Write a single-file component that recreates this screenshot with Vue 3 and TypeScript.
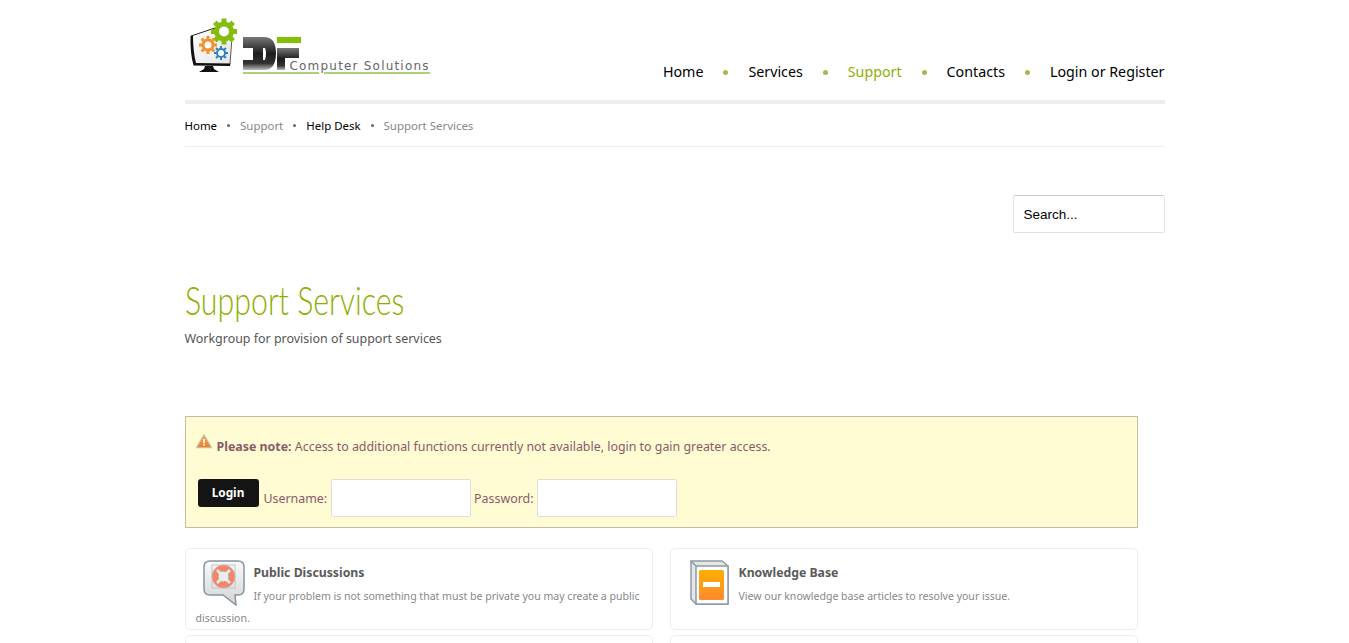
<script setup lang="ts">
const nav = [
  { label: 'Home', active: false },
  { label: 'Services', active: false },
  { label: 'Support', active: true },
  { label: 'Contacts', active: false },
  { label: 'Login or Register', active: false },
]
const crumbs = [
  { label: 'Home', link: true },
  { label: 'Support', link: false },
  { label: 'Help Desk', link: true },
  { label: 'Support Services', link: false },
]
const gearTeeth = [0, 45, 90, 135, 180, 225, 270, 315]
</script>

<template>
  <div class="page">
    <header class="header">
      <div class="logo">
        <svg width="246" height="60" viewBox="0 0 246 60" class="logo-mark">
          <defs>
            <linearGradient id="dfg" x1="0" y1="0" x2="0" y2="1">
              <stop offset="0" stop-color="#787878" />
              <stop offset="0.5" stop-color="#1c1c1c" />
              <stop offset="0.8" stop-color="#333" />
              <stop offset="1" stop-color="#bbb" />
            </linearGradient>
            <linearGradient id="scr" x1="0" y1="0" x2="1" y2="1">
              <stop offset="0" stop-color="#fff" />
              <stop offset="1" stop-color="#e6e6e6" />
            </linearGradient>
          </defs>
          <!-- monitor -->
          <path d="M6 21 L46 11 L45 49 L9 50 Z" fill="url(#scr)" />
          <path d="M6 21 L30 13" stroke="#222" stroke-width="1" fill="none" />
          <path d="M47 22 L45 49" stroke="#555" stroke-width="1" fill="none" />
          <path d="M5.5 21 Q5 38 8.5 50.5 L45 51 L45.5 48.5 L11 48 Q8 36 8 21 Z" fill="#111" />
          <path d="M20 51 H28 L29 54 L34 57 H14 L19 54 Z" fill="#111" />
          <g transform="translate(39 16.5)">
            <rect v-for="a in gearTeeth" :key="a" x="-2.5" y="-13" width="5" height="5" fill="#86bc10" :transform="`rotate(${a})`" />
            <circle r="7.5" fill="#fff" stroke="#86bc10" stroke-width="5" />
          </g>
          <g transform="translate(23 30)">
            <rect v-for="a in gearTeeth" :key="a" x="-1.5" y="-9" width="3" height="3" fill="#f5922a" :transform="`rotate(${a})`" />
            <circle r="5" fill="#fff" stroke="#f5922a" stroke-width="3" />
          </g>
          <g transform="translate(36 38)">
            <rect v-for="a in gearTeeth" :key="a" x="-1" y="-7" width="2" height="2.5" fill="#2a80c8" :transform="`rotate(${a})`" />
            <circle r="4" fill="#fff" stroke="#2a80c8" stroke-width="2" />
          </g>
          <!-- DF letters -->
          <path fill-rule="evenodd" d="M58 22 H79 Q91 22 91 38 Q91 55 79 55 H58 V45 H68 V33 H58 Z M78 33 H80 Q82 38 80 45 H78 Z" fill="url(#dfg)" />
          <path d="M92 33 H114 V43 H100 V55 H92 Z" fill="url(#dfg)" />
          <rect x="92" y="22" width="24" height="6" fill="#85c000" />
          <rect x="58" y="57" width="76" height="2" fill="#a9d27a" />
          <rect x="139" y="57" width="106" height="2" fill="#a9d27a" />
        </svg>
        <span class="logo-text">Computer Solutions</span>
      </div>
      <nav class="nav">
        <template v-for="(item, i) in nav" :key="item.label">
          <span v-if="i > 0" class="nav-dot"></span>
          <a class="nav-link" :class="{ active: item.active }">{{ item.label }}</a>
        </template>
      </nav>
    </header>

    <div class="crumbs">
      <template v-for="(c, i) in crumbs" :key="c.label">
        <span v-if="i > 0" class="crumb-dot"></span>
        <a :class="c.link ? 'crumb-link' : 'crumb-text'">{{ c.label }}</a>
      </template>
    </div>

    <div class="search-row">
      <input class="search" type="text" value="Search..." />
    </div>

    <h1 class="title">Support Services</h1>
    <p class="subtitle">Workgroup for provision of support services</p>

    <section class="main">
      <div class="notice">
        <p class="notice-msg">
          <svg class="warn" width="16" height="15" viewBox="0 0 16 15">
            <defs>
              <linearGradient id="wg" x1="0" y1="0" x2="0" y2="1">
                <stop offset="0" stop-color="#ffa54d" />
                <stop offset="1" stop-color="#f47a20" />
              </linearGradient>
            </defs>
            <path d="M8 0.8 L15.4 13.6 H0.6 Z" fill="url(#wg)" stroke="#c4bea8" stroke-width="1.1" stroke-linejoin="round" />
            <rect x="7.2" y="5" width="1.6" height="4.4" fill="#fff" />
            <rect x="7.2" y="10.2" width="1.6" height="1.6" fill="#fff" />
          </svg>
          <strong>Please note:</strong> Access to additional functions currently not available, login to gain greater access.
        </p>
        <div class="login-row">
          <button class="login-btn">Login</button>
          <label class="lbl">Username:</label>
          <input class="field" type="text" />
          <label class="lbl">Password:</label>
          <input class="field" type="password" />
        </div>
      </div>

      <div class="cards">
        <article class="card">
          <svg class="card-icon icon-a" width="42" height="46" viewBox="0 0 42 46">
            <defs>
              <linearGradient id="bub" x1="0" y1="0" x2="0" y2="1">
                <stop offset="0" stop-color="#fafafa" />
                <stop offset="1" stop-color="#d4d4d4" />
              </linearGradient>
            </defs>
            <path d="M7 1 H35 Q41 1 41 7 V29 Q41 35 35 35 H32 L33 45 L20 35 H7 Q1 35 1 29 V7 Q1 1 7 1 Z" fill="url(#bub)" stroke="#8794a0" stroke-width="1.5" />
            <rect x="9" y="5" width="23" height="23" fill="none" stroke="#c4c4c4" stroke-width="1" />
            <circle cx="20.5" cy="16.5" r="8.5" fill="none" stroke="#fa8364" stroke-width="5.5" />
            <circle cx="20.5" cy="16.5" r="11.5" fill="none" stroke="#b0b0b0" stroke-width="0.8" />
            <circle cx="20.5" cy="16.5" r="5.5" fill="#ececec" stroke="#999" stroke-width="1" />
            <path d="M14 10 L17.5 13.5 M27 10 L23.5 13.5 M14 23 L17.5 19.5 M27 23 L23.5 19.5" stroke="#e8e8e8" stroke-width="3" />
          </svg>
          <h3 class="card-title">Public Discussions</h3>
          <p class="card-text">If your problem is not something that must be private you may create a public discussion.</p>
        </article>
        <article class="card">
          <svg class="card-icon icon-b" width="39" height="45" viewBox="0 0 39 45">
            <defs>
              <linearGradient id="bk" x1="0" y1="0" x2="0" y2="1">
                <stop offset="0" stop-color="#ffae00" />
                <stop offset="1" stop-color="#ff8a30" />
              </linearGradient>
            </defs>
            <path d="M1 1 H32 L38 6 V44 H6 L1 39 Z" fill="#e4e6e8" stroke="#8f99a3" stroke-width="1.5" />
            <path d="M1 1 L6 6 H38 V44 H6 V6" fill="#fff" stroke="#8f99a3" stroke-width="1.5" />
            <rect x="9" y="10" width="25" height="30" rx="1.5" fill="url(#bk)" />
            <rect x="13" y="22" width="17" height="5" fill="#fff" />
          </svg>
          <h3 class="card-title">Knowledge Base</h3>
          <p class="card-text">View our knowledge base articles to resolve your issue.</p>
        </article>
        <article class="card"></article>
        <article class="card"></article>
      </div>
    </section>
  </div>
</template>

<style>
html, body { margin: 0; background: #fff; }
#app { height: 643px; overflow: hidden; }
</style>

<style scoped>
.page {
  width: 980px;
  margin: 0 auto;
  font-family: "Noto Sans", "Open Sans", sans-serif;
  color: #444;
  font-size: 12px;
}
.header {
  height: 100px;
  border-bottom: 4px solid #eee;
  display: flex;
  justify-content: space-between;
  align-items: flex-end;
}
.logo {
  position: relative;
  align-self: flex-start;
  padding-top: 15px;
}
.logo-mark { display: block; }
.logo-text {
  position: absolute;
  left: 105px;
  top: 59px;
  font-family: "DejaVu Sans", sans-serif;
  font-size: 12px;
  line-height: 14px;
  letter-spacing: 1.2px;
  color: #666;
  white-space: nowrap;
}
.nav {
  display: flex;
  align-items: center;
  margin-bottom: 18px;
  font-size: 14.25px;
  line-height: 20px;
}
.nav-link { color: #000; white-space: nowrap; }
.nav-link.active { color: #8db000; }
.nav-dot {
  width: 5px;
  height: 5px;
  border-radius: 50%;
  background: #9dbb50;
  margin: 1px 20px 0;
}
.crumbs {
  height: 42px;
  border-bottom: 1px solid #eee;
  display: flex;
  align-items: center;
  font-size: 11.45px;
}
.crumb-link { color: #000; }
.crumb-text { color: #888; }
.crumb-dot {
  width: 3px;
  height: 3px;
  border-radius: 50%;
  background: #666;
  margin: 0 10px 0 10px;
}
.search-row {
  display: flex;
  justify-content: flex-end;
  margin-top: 48px;
}
.search {
  width: 152px;
  height: 38px;
  box-sizing: border-box;
  border: 1px solid #e2e2e2;
  border-top-color: #ccc;
  border-radius: 2px;
  padding: 0 10px;
  font-family: "Liberation Sans", sans-serif;
  font-size: 13.5px;
  color: #000;
  outline: none;
}
.title {
  margin: 43px 0 0;
  font-family: "Lato", sans-serif;
  font-weight: 300;
  font-size: 40px;
  line-height: 48px;
  color: #8db000;
  transform: scaleX(0.758);
  transform-origin: left center;
  white-space: nowrap;
}
.subtitle {
  margin: 6px 0 0;
  font-size: 12.45px;
  line-height: 18px;
  color: #555;
}
.main { width: 953px; margin-top: 68px; }
.notice {
  height: 112px;
  box-sizing: border-box;
  border: 1px solid #c2bfa6;
  background: #fffbd2;
  color: #8a5a6c;
  padding: 0 12px;
}
.notice-msg {
  margin: 0;
  padding-top: 21px;
  line-height: 18px;
  font-size: 12.4px;
  position: relative;
  padding-left: 19px;
}
.notice-msg strong { font-weight: 700; }
.warn { position: absolute; left: -2px; top: 17px; }
.login-row {
  display: flex;
  align-items: flex-start;
  margin-top: 23px;
}
.login-btn {
  width: 61px;
  height: 28px;
  border: 0;
  border-radius: 3px;
  background: #141414;
  color: #fff;
  font-family: "Noto Sans", sans-serif;
  font-weight: 700;
  font-size: 11.8px;
  padding: 0 0 2px;
  margin-right: 5px;
}
.lbl {
  font-size: 12.4px;
  line-height: 40px;
  margin-right: 4px;
}
.field {
  width: 140px;
  height: 38px;
  box-sizing: border-box;
  background: #fff;
  border: 1px solid #ddd;
  border-radius: 2px;
  margin-right: 3px;
  outline: none;
}
.cards {
  display: grid;
  grid-template-columns: 468px 468px;
  column-gap: 17px;
  row-gap: 5px;
  margin-top: 20px;
}
.card {
  height: 82px;
  box-sizing: border-box;
  border: 1px solid #eee;
  border-radius: 5px;
  padding: 11px 10px 0;
  overflow: hidden;
}
.card-icon { float: left; }
.icon-a { margin: 0 9px 0 7px; }
.icon-b { margin: 0 10px 0 9px; }
.card-title {
  margin: 4px 0 0;
  font-size: 12.25px;
  line-height: 18px;
  font-weight: 700;
  color: #5a5a5a;
}
.card-text {
  margin: 3px 0 0;
  font-size: 10.54px;
  line-height: 22px;
  color: #888;
}
</style>
